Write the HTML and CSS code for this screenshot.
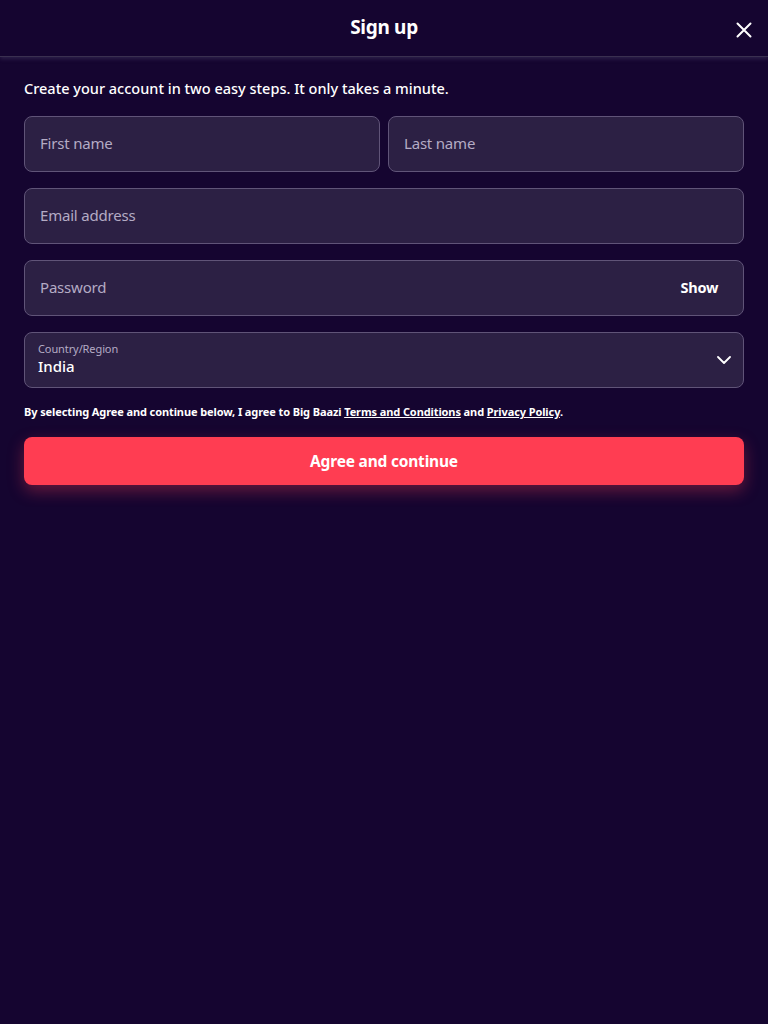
FILE: index.html
```html
<!DOCTYPE html>
<html lang="en">
<head>
  <meta charset="UTF-8" />
  <meta name="viewport" content="width=device-width, initial-scale=1.0"/>
  <title>Sign up</title>
  <link rel="stylesheet" href="styles.css">
</head>
<body>
  <header class="topbar">
    <h1>Sign up</h1>
    <button class="close" aria-label="Close">
      <svg width="16" height="16" viewBox="0 0 16 16"><path d="M1.5 1.5l13 13M14.5 1.5l-13 13" stroke="#fff" stroke-width="2" stroke-linecap="round"/></svg>
    </button>
  </header>

  <main class="form">
    <p class="intro">Create your account in two easy steps. It only takes a minute.</p>

    <div class="row">
      <div class="field"><span class="placeholder">First name</span></div>
      <div class="field"><span class="placeholder">Last name</span></div>
    </div>

    <div class="field"><span class="placeholder">Email address</span></div>

    <div class="field">
      <span class="placeholder">Password</span>
      <span class="show">Show</span>
    </div>

    <div class="field select">
      <div class="select-text">
        <span class="label">Country/Region</span>
        <span class="value">India</span>
      </div>
      <svg width="14" height="8" viewBox="0 0 14 8"><path d="M1 1l6 6 6-6" fill="none" stroke="#fff" stroke-width="1.8" stroke-linecap="round" stroke-linejoin="round"/></svg>
    </div>

    <p class="terms">By selecting Agree and continue below, I agree to Big Baazi <a href="#">Terms and Conditions</a> and <a href="#">Privacy Policy</a>.</p>

    <button class="btn-agree">Agree and continue</button>
  </main>
</body>
</html>
```

FILE: styles.css
```css
body {
  margin: 0;
  background: #150530;
  color: #ffffff;
  font-family: 'Noto Sans', 'Open Sans', sans-serif;
}

.topbar {
  height: 56px;
  display: flex;
  align-items: center;
  justify-content: center;
  position: relative;
  border-bottom: 1px solid #3a3050;
  box-shadow: 0 2px 4px rgba(120, 110, 150, 0.25);
}

.topbar h1 {
  margin: 0 0 2px;
  font-size: 19px;
  font-weight: 700;
  letter-spacing: -0.3px;
}

.close {
  position: absolute;
  right: 16px;
  top: 22px;
  background: none;
  border: none;
  padding: 0;
  width: 16px;
  height: 16px;
  cursor: pointer;
}

.form {
  padding: 22px 24px;
  display: flex;
  flex-direction: column;
  gap: 16px;
}

.intro {
  margin: -1px 0 2px;
  font-size: 14.5px;
  font-weight: 500;
  letter-spacing: 0;
}

.row {
  display: flex;
  gap: 8px;
}

.row .field {
  flex: 1;
}

.field {
  height: 56px;
  box-sizing: border-box;
  background: #2c2044;
  border: 1px solid #605478;
  border-radius: 8px;
  padding: 0 15px 3px;
  display: flex;
  align-items: center;
  justify-content: space-between;
}

.placeholder {
  color: #b4abc4;
  font-size: 15px;
  letter-spacing: -0.2px;
}

.show {
  font-size: 14.5px;
  font-weight: 700;
  margin-right: 10px;
  letter-spacing: -0.3px;
}

.select {
  padding: 0 12px 0 13px;
}

.select-text {
  display: flex;
  flex-direction: column;
  gap: 0;
  margin-top: -3px;
}

.label {
  font-size: 11px;
  color: #b4abc4;
  letter-spacing: -0.1px;
}

.value {
  font-size: 15px;
  font-weight: 500;
}

.terms {
  margin: 0;
  font-size: 11px;
  font-weight: 700;
  letter-spacing: -0.1px;
}

.terms a {
  color: #ffffff;
}

.btn-agree {
  height: 48px;
  margin-top: 2px;
  border: none;
  border-radius: 8px;
  background: #ff3d52;
  color: #ffffff;
  font-family: inherit;
  font-size: 15.5px;
  font-weight: 700;
  letter-spacing: -0.2px;
  box-shadow: 0 6px 16px rgba(255, 61, 82, 0.35);
  cursor: pointer;
}
```
